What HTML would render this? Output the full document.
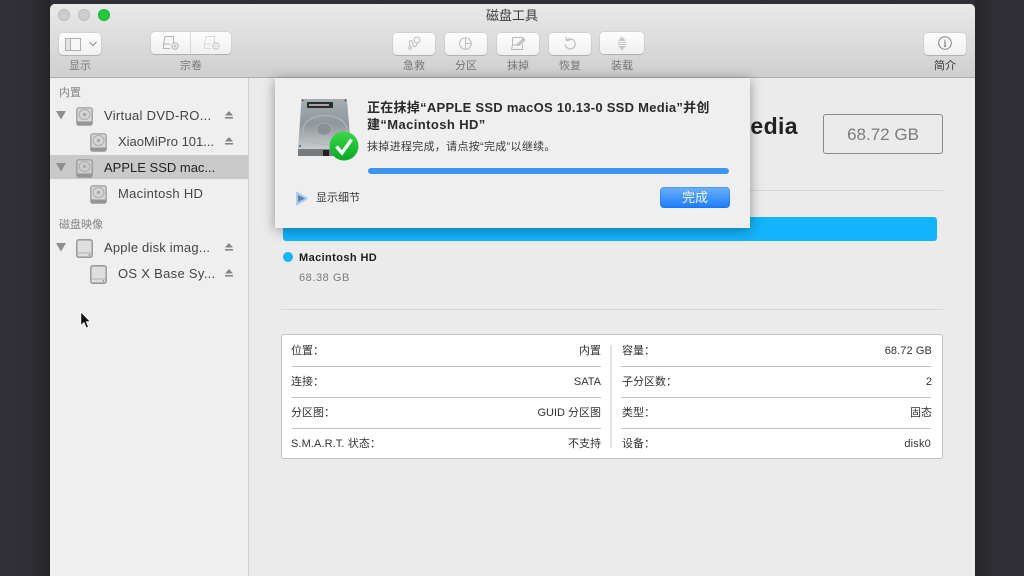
<!DOCTYPE html>
<html lang="zh"><head><meta charset="utf-8">
<style>
html,body{margin:0;padding:0;width:1024px;height:576px;overflow:hidden;background:#2f2f35}
body{font-family:"Liberation Sans","Noto Sans CJK SC",sans-serif;position:relative;color:#333}
.a,.t{position:absolute}
.t{white-space:nowrap;font-size:11px;line-height:14px}
.r{text-align:right}
.c{text-align:center}
.btn{position:absolute;background:linear-gradient(#fdfdfd,#f0f0f0);border-radius:4px;box-shadow:0 0 1px rgba(0,0,0,.35),0 1px 0 rgba(0,0,0,.12);height:22px}
.lab{position:absolute;font-size:11px;line-height:14px;color:#757575;text-align:center;top:59px;white-space:nowrap}
.side{font-size:13px;line-height:16px;color:#444;letter-spacing:.3px}
.hd{font-size:11px;color:#858585}
.line{position:absolute;height:1px;background:#c2c2c2}
svg{position:absolute;overflow:visible}
</style></head><body>
<div class="a" style="left:0;top:0;width:50px;height:576px;background:linear-gradient(90deg,#303036,#2f2f35 60%,#242428)"></div>
<div class="a" style="left:975px;top:0;width:49px;height:576px;background:linear-gradient(90deg,#26262a,#2f2f35 40%)"></div>

<!-- window -->
<div class="a" style="left:50px;top:4px;width:925px;height:572px;background:#ebebeb;border-radius:5px 5px 0 0;overflow:hidden">
  <div class="a" style="left:0;top:0;width:925px;height:73px;background:linear-gradient(#e9e9e9,#cfcfcf);border-bottom:1px solid #adadad"></div>
  <div class="a" style="left:0;top:74px;width:198px;height:498px;background:#efefef;border-right:1px solid #d0d0d0"></div>
</div>
<div class="a" style="left:58px;top:9px;width:10px;height:10px;border-radius:50%;background:#cdcdcd;border:1px solid #bdbdbd"></div>
<div class="a" style="left:78px;top:9px;width:10px;height:10px;border-radius:50%;background:#cdcdcd;border:1px solid #bdbdbd"></div>
<div class="a" style="left:98px;top:9px;width:10px;height:10px;border-radius:50%;background:#24c83e;border:1px solid #1fb535"></div>
<div class="t c" style="left:462px;top:7px;width:100px;font-size:13px;line-height:17px;color:#3c3c3c">磁盘工具</div>

<!-- toolbar -->
<div class="btn" style="left:59px;top:33px;width:42px"></div>
<svg style="left:65px;top:38px" width="20" height="13" fill="none" stroke="#b0b0b0"><rect x=".5" y=".5" width="15" height="12" fill="#f6f6f6"/><rect x=".5" y=".5" width="5" height="12" fill="#e4e4e4"/></svg>
<svg style="left:89px;top:41px" width="8" height="6" fill="none" stroke="#999" stroke-width="1.2"><path d="M.5 1 L4 4.500 L7.500 1"/></svg>
<div class="lab" style="left:59px;width:42px">显示</div>

<div class="btn" style="left:151px;top:32px;width:80px"></div>
<div class="a" style="left:190px;top:32px;width:1px;height:22px;background:#d8d8d8"></div>
<svg style="left:163px;top:36px" width="16" height="14" fill="none" stroke="#b4b4b4"><path d="M2 .5H10.500V7M.5 8V12.500H7M2 .5L.5 8H7"/><circle cx="12" cy="10" r="3.200"/><path d="M10.500 10H13.500M12 8.500V11.500"/></svg>
<svg style="left:204px;top:36px" width="16" height="14" fill="none" stroke="#dadada"><path d="M2 .5H10.500V7M.5 8V12.500H7M2 .5L.5 8H7"/><circle cx="12" cy="10" r="3.200" stroke="#c4c4c4"/><path d="M10.500 10H13.500" stroke="#c4c4c4"/></svg>
<div class="lab" style="left:151px;width:80px">宗卷</div>

<div class="btn" style="left:393px;top:33px;width:42px"></div>
<svg style="left:407px;top:36px" width="15" height="14" fill="none" stroke="#bcbcbc"><circle cx="10" cy="4" r="3"/><path d="M10 7C10 11 7 11.500 6 9.500C5.500 8 6 6 5 5C4 4 2.500 4.500 2.500 6C2.500 8 3 9 3 11"/><circle cx="3" cy="12" r="1.300"/></svg>
<div class="lab" style="left:393px;width:42px">急救</div>

<div class="btn" style="left:445px;top:33px;width:42px"></div>
<svg style="left:459px;top:37px" width="13" height="13" fill="none" stroke="#bcbcbc"><circle cx="6.500" cy="6.500" r="5.800"/><path d="M6.500 .5V12.500M6.500 6.500H12.500"/></svg>
<div class="lab" style="left:445px;width:42px">分区</div>

<div class="btn" style="left:497px;top:33px;width:42px"></div>
<svg style="left:511px;top:37px" width="15" height="13" fill="none" stroke="#b8b8b8"><path d="M1.500 .5H11.500V3M11.500 7V12.500H.5L1.500 8H8M1.500 .5V8"/><path d="M6 7.500L12.500 1.500L14 3L8 8.500Z" fill="#cccccc"/></svg>
<div class="lab" style="left:497px;width:42px">抹掉</div>

<div class="btn" style="left:549px;top:33px;width:42px"></div>
<svg style="left:563px;top:36px" width="14" height="15" fill="none" stroke="#b8b8b8" stroke-width="1.100"><path d="M3.500 4.500A5 5 0 1 1 2.200 8.500"/><path d="M3 1L3.500 4.500L7 4" /></svg>
<div class="lab" style="left:549px;width:42px">恢复</div>

<div class="btn" style="left:600px;top:32px;width:44px"></div>
<svg style="left:617px;top:36px" width="10" height="15" fill="#c8c8c8"><path d="M5 .5L9 5H1Z"/><path d="M5 14.500L9 10H1Z"/><rect x="1" y="6" width="8" height="1"/><rect x="1" y="8" width="8" height="1"/></svg>
<div class="lab" style="left:600px;width:44px">装载</div>

<div class="btn" style="left:924px;top:33px;width:42px"></div>
<svg style="left:938px;top:36px" width="14" height="14" fill="none" stroke="#808080"><circle cx="7" cy="7" r="6.300"/></svg>
<div class="t c" style="left:938px;top:36px;width:14px;font-family:'Liberation Serif',serif;font-size:12px;color:#555">i</div>
<div class="lab" style="left:924px;width:42px;color:#3a3a3a">简介</div>

<!-- sidebar -->
<div class="a" style="left:50px;top:155px;width:198px;height:24px;background:#c9c9c9"></div>
<div class="t hd" style="left:59px;top:86px">内置</div>
<div class="t hd" style="left:59px;top:218px">磁盘映像</div>

<svg style="left:56px;top:111px" width="10" height="9" fill="#8e8e8e"><path d="M0 0H10L5 8.500Z"/></svg>
<svg style="left:56px;top:163px" width="10" height="9" fill="#8e8e8e"><path d="M0 0H10L5 8.500Z"/></svg>
<svg style="left:56px;top:243px" width="10" height="9" fill="#8e8e8e"><path d="M0 0H10L5 8.500Z"/></svg>

<svg style="left:76px;top:107px" width="17" height="19"><rect x=".8" y=".8" width="15.400" height="17.400" rx="2" fill="#d6d6d6" stroke="#979797" stroke-width="1.200"/><rect x="1" y="14.500" width="15" height="3.500" fill="#959595"/><ellipse cx="8.500" cy="7.500" rx="5.500" ry="5" fill="none" stroke="#ababab"/><circle cx="8.500" cy="7.500" r="1.800" fill="#ababab"/></svg>
<svg style="left:90px;top:133px" width="17" height="19"><rect x=".8" y=".8" width="15.400" height="17.400" rx="2" fill="#d6d6d6" stroke="#979797" stroke-width="1.200"/><rect x="1" y="14.500" width="15" height="3.500" fill="#959595"/><ellipse cx="8.500" cy="7.500" rx="5.500" ry="5" fill="none" stroke="#ababab"/><circle cx="8.500" cy="7.500" r="1.800" fill="#ababab"/></svg>
<svg style="left:76px;top:159px" width="17" height="19"><rect x=".8" y=".8" width="15.400" height="17.400" rx="2" fill="#cdcdcd" stroke="#979797" stroke-width="1.200"/><rect x="1" y="14.500" width="15" height="3.500" fill="#959595"/><ellipse cx="8.500" cy="7.500" rx="5.500" ry="5" fill="none" stroke="#ababab"/><circle cx="8.500" cy="7.500" r="1.800" fill="#ababab"/></svg>
<svg style="left:90px;top:185px" width="17" height="19"><rect x=".8" y=".8" width="15.400" height="17.400" rx="2" fill="#d6d6d6" stroke="#979797" stroke-width="1.200"/><rect x="1" y="14.500" width="15" height="3.500" fill="#959595"/><ellipse cx="8.500" cy="7.500" rx="5.500" ry="5" fill="none" stroke="#ababab"/><circle cx="8.500" cy="7.500" r="1.800" fill="#ababab"/></svg>
<svg style="left:76px;top:239px" width="17" height="19"><rect x=".8" y=".8" width="15.400" height="17.400" rx="2" fill="#dedede" stroke="#8e8e8e" stroke-width="1.300"/><path d="M1 14H16" stroke="#b0b0b0"/><circle cx="13.500" cy="16" r=".8" fill="#777"/></svg>
<svg style="left:90px;top:265px" width="17" height="19"><rect x=".8" y=".8" width="15.400" height="17.400" rx="2" fill="#dedede" stroke="#8e8e8e" stroke-width="1.300"/><path d="M1 14H16" stroke="#b0b0b0"/><circle cx="13.500" cy="16" r=".8" fill="#777"/></svg>

<div class="t side" style="left:104px;top:108px">Virtual DVD-RO...</div>
<div class="t side" style="left:118px;top:134px;letter-spacing:0">XiaoMiPro 101...</div>
<div class="t side" style="left:104px;top:160px;color:#222;letter-spacing:0">APPLE SSD mac...</div>
<div class="t side" style="left:118px;top:186px">Macintosh HD</div>
<div class="t side" style="left:104px;top:240px;letter-spacing:.2px">Apple disk imag...</div>
<div class="t side" style="left:118px;top:266px">OS X Base Sy...</div>

<svg style="left:225px;top:111px" width="8" height="8" fill="#858585"><path d="M4 0L8 4.500H0Z"/><rect y="6" width="8" height="1.600"/></svg>
<svg style="left:225px;top:137px" width="8" height="8" fill="#858585"><path d="M4 0L8 4.500H0Z"/><rect y="6" width="8" height="1.600"/></svg>
<svg style="left:225px;top:243px" width="8" height="8" fill="#858585"><path d="M4 0L8 4.500H0Z"/><rect y="6" width="8" height="1.600"/></svg>
<svg style="left:225px;top:269px" width="8" height="8" fill="#858585"><path d="M4 0L8 4.500H0Z"/><rect y="6" width="8" height="1.600"/></svg>

<!-- cursor -->
<svg style="left:80px;top:311px" width="12" height="19"><path d="M.8 .8V14.500L4 11.500L6.300 17L8.500 16L6.300 10.800H10.500Z" fill="#111" stroke="#fff" stroke-width=".8"/></svg>

<!-- main -->
<div class="t" style="left:700px;top:112px;width:98px;text-align:right;font-size:23px;line-height:28px;font-weight:bold;color:#222;letter-spacing:.4px">edia</div>
<div class="a" style="left:823px;top:114px;width:118px;height:38px;border:1px solid #8a8a8a;border-radius:3px"></div>
<div class="t c" style="left:823px;top:124px;width:120px;font-size:17px;line-height:21px;color:#7c7c7c">68.72 GB</div>
<div class="a" style="left:283px;top:190px;width:660px;height:1px;background:#d4d4d4"></div>
<div class="a" style="left:283px;top:217px;width:654px;height:24px;background:#12b5fb;border-radius:0 3px 3px 3px"></div>
<div class="a" style="left:283px;top:252px;width:10px;height:10px;border-radius:50%;background:#12b5fb"></div>
<div class="t" style="left:299px;top:251px;font-weight:bold;color:#1c1c1c;font-size:11px;letter-spacing:.4px">Macintosh HD</div>
<div class="t" style="left:299px;top:271px;color:#7c7c7c;font-size:11px;letter-spacing:.55px">68.38 GB</div>
<div class="a" style="left:281px;top:309px;width:662px;height:1px;background:#d4d4d4"></div>

<!-- table -->
<div class="a" style="left:281px;top:334px;width:660px;height:123px;background:#fff;border:1px solid #c2c2c2;border-radius:3px"></div>
<div class="a" style="left:610px;top:345px;width:2px;height:103px;background:#e2e2e2"></div>
<div class="line" style="left:292px;top:366px;width:309px"></div>
<div class="line" style="left:292px;top:397px;width:309px"></div>
<div class="line" style="left:292px;top:428px;width:309px"></div>
<div class="line" style="left:621px;top:366px;width:310px"></div>
<div class="line" style="left:621px;top:397px;width:310px"></div>
<div class="line" style="left:621px;top:428px;width:310px"></div>

<div class="t" style="left:291px;top:344px">位置：</div>
<div class="t" style="left:291px;top:375px">连接：</div>
<div class="t" style="left:291px;top:406px">分区图：</div>
<div class="t" style="left:291px;top:437px;letter-spacing:.1px">S.M.A.R.T. 状态：</div>
<div class="t r" style="left:451px;width:150px;top:344px">内置</div>
<div class="t r" style="left:451px;width:150px;top:375px">SATA</div>
<div class="t r" style="left:451px;width:150px;top:406px">GUID 分区图</div>
<div class="t r" style="left:451px;width:150px;top:437px">不支持</div>

<div class="t" style="left:622px;top:344px">容量：</div>
<div class="t" style="left:622px;top:375px">子分区数：</div>
<div class="t" style="left:622px;top:406px">类型：</div>
<div class="t" style="left:622px;top:437px">设备：</div>
<div class="t r" style="left:782px;width:150px;top:344px;letter-spacing:.1px">68.72 GB</div>
<div class="t r" style="left:782px;width:150px;top:375px">2</div>
<div class="t r" style="left:782px;width:150px;top:406px">固态</div>
<div class="t r" style="left:781px;width:150px;top:437px;letter-spacing:.2px">disk0</div>

<!-- sheet -->
<div class="a" style="left:275px;top:78px;width:475px;height:150px;background:#efefef;box-shadow:0 2px 12px rgba(0,0,0,.38)"></div>

<svg style="left:298px;top:98px" width="60" height="62">
<defs>
<linearGradient id="h" x1="0" y1="0" x2="0" y2="1"><stop offset="0" stop-color="#a6aeb2"/><stop offset=".5" stop-color="#8f979a"/><stop offset="1" stop-color="#c8cdcf"/></linearGradient>
<linearGradient id="g" x1="0" y1="0" x2="0" y2="1"><stop offset="0" stop-color="#3cd84a"/><stop offset="1" stop-color="#08a822"/></linearGradient>
</defs>
<path d="M3.500 1H49L53 51H0Z" fill="url(#h)"/>
<rect x="0" y="51" width="53" height="7" fill="#777b7d"/>
<ellipse cx="27" cy="32" rx="22" ry="14.500" fill="none" stroke="#b0b6b9" stroke-width="1.200"/>
<ellipse cx="26" cy="31" rx="7.500" ry="6" fill="#8a9093" stroke="#a5abae"/>
<circle cx="4.500" cy="2.500" r="1" fill="#555"/><circle cx="47.500" cy="2.500" r="1" fill="#555"/><circle cx="2" cy="48" r="1" fill="#555"/>
<rect x="9" y="4" width="26" height="6" fill="#2b2d2f"/>
<rect x="11" y="6" width="20" height="2" fill="#a8a8a8"/>
<rect x="25" y="52" width="6" height="6" fill="#222"/>
<circle cx="46" cy="48" r="14.500" fill="url(#g)"/>
<path d="M38.500 48.500L44 55L53.500 41.500" fill="none" stroke="#fff" stroke-width="3.400"/>
</svg>

<div class="t" style="left:367px;top:99px;font-size:13px;line-height:17px;font-weight:bold;color:#2a2a2a;letter-spacing:.27px">正在抹掉“APPLE SSD macOS 10.13-0 SSD Media”并创</div>
<div class="t" style="left:367px;top:116px;font-size:13px;line-height:17px;font-weight:bold;color:#2a2a2a;letter-spacing:.4px">建“Macintosh HD”</div>
<div class="t" style="left:367px;top:140px;font-size:11px;color:#3a3a3a;letter-spacing:.3px">抹掉进程完成，请点按“完成”以继续。</div>
<div class="a" style="left:368px;top:168px;width:361px;height:6px;background:#3d94ef;border-radius:3px"></div>

<svg style="left:295px;top:191px" width="13" height="15"><path d="M1 1.500Q1 0 2.500 .8L12 6.500Q13 7.500 12 8.500L2.500 14.200Q1 15 1 13.500Z" fill="#a9cdf3"/><path d="M3 4L10 7.500L3 11Z" fill="#5f7f9f"/></svg>
<div class="t" style="left:316px;top:191px;color:#3a3a3a">显示细节</div>

<div class="a" style="left:660px;top:187px;width:70px;height:21px;border-radius:4px;background:linear-gradient(#6eb1fb,#1a7cfb);box-shadow:inset 0 0 0 1px rgba(20,100,220,.3)"></div>
<div class="t c" style="left:660px;top:190px;width:70px;font-size:13px;line-height:15px;color:#f4f8ff">完成</div>
</body></html>
